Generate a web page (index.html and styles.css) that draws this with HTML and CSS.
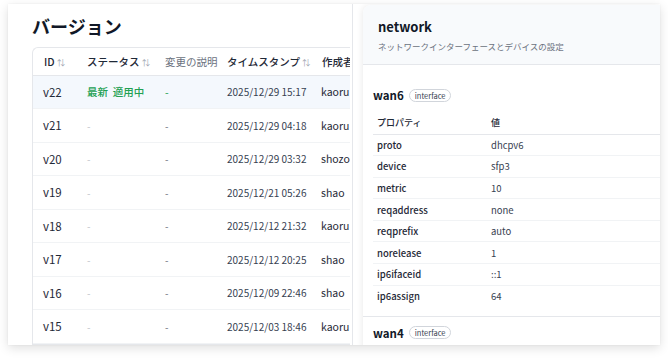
FILE: index.html
```html
<!DOCTYPE html>
<html lang="ja">
<head>
<meta charset="utf-8">
<link rel="stylesheet" href="styles.css">
</head>
<body>
<div class="frame">
  <div class="left">
    <h1 class="title">バージョン</h1>
    <div class="tablewrap">
      <table class="versions">
        <colgroup>
          <col class="c-id"><col class="c-status"><col class="c-desc"><col class="c-ts"><col class="c-user">
        </colgroup>
        <thead>
          <tr>
            <th>ID <span class="sort">⇅</span></th>
            <th>ステータス <span class="sort">⇅</span></th>
            <th class="nosort">変更の説明</th>
            <th>タイムスタンプ <span class="sort">⇅</span></th>
            <th>作成者</th>
          </tr>
        </thead>
        <tbody>
          <tr class="current"><td class="id">v22</td><td class="status ok">最新&nbsp;&nbsp;適用中</td><td class="desc ok">-</td><td class="ts">2025/12/29 15:17</td><td class="user">kaoru</td></tr>
          <tr><td class="id">v21</td><td class="status">-</td><td class="desc">-</td><td class="ts">2025/12/29 04:18</td><td class="user">kaoru</td></tr>
          <tr><td class="id">v20</td><td class="status">-</td><td class="desc">-</td><td class="ts">2025/12/29 03:32</td><td class="user">shozo</td></tr>
          <tr><td class="id">v19</td><td class="status">-</td><td class="desc">-</td><td class="ts">2025/12/21 05:26</td><td class="user">shao</td></tr>
          <tr><td class="id">v18</td><td class="status">-</td><td class="desc">-</td><td class="ts">2025/12/12 21:32</td><td class="user">kaoru</td></tr>
          <tr><td class="id">v17</td><td class="status">-</td><td class="desc">-</td><td class="ts">2025/12/12 20:25</td><td class="user">shao</td></tr>
          <tr><td class="id">v16</td><td class="status">-</td><td class="desc">-</td><td class="ts">2025/12/09 22:46</td><td class="user">shao</td></tr>
          <tr><td class="id">v15</td><td class="status">-</td><td class="desc">-</td><td class="ts">2025/12/03 18:46</td><td class="user">kaoru</td></tr>
        </tbody>
      </table>
    </div>
  </div>
  <div class="right">
    <div class="card">
      <div class="card-head">
        <div class="card-title">network</div>
        <div class="card-sub">ネットワークインターフェースとデバイスの設定</div>
      </div>
      <div class="section">
        <div class="sec-title"><span class="sec-name">wan6</span><span class="badge">interface</span></div>
        <table class="props">
          <colgroup><col class="c-prop"><col></colgroup>
          <thead><tr><th>プロパティ</th><th>値</th></tr></thead>
          <tbody>
            <tr><td class="key">proto</td><td>dhcpv6</td></tr>
            <tr><td class="key">device</td><td>sfp3</td></tr>
            <tr><td class="key">metric</td><td>10</td></tr>
            <tr><td class="key">reqaddress</td><td>none</td></tr>
            <tr><td class="key">reqprefix</td><td>auto</td></tr>
            <tr><td class="key">norelease</td><td>1</td></tr>
            <tr><td class="key">ip6ifaceid</td><td>::1</td></tr>
            <tr><td class="key">ip6assign</td><td>64</td></tr>
          </tbody>
        </table>
      </div>
      <div class="section next">
        <div class="sec-title"><span class="sec-name">wan4</span><span class="badge">interface</span></div>
      </div>
    </div>
  </div>
</div>
</body>
</html>
```
FILE: styles.css
```css
* { box-sizing: border-box; }
html, body { margin: 0; padding: 0; background: #ffffff; }
body {
  font-family: "Noto Sans CJK JP", "Noto Sans", sans-serif;
  color: #1f2937;
  width: 668px;
  height: 359px;
  overflow: hidden;
}
.frame {
  margin: 4px 0 0 8px;
  width: 652px;
  height: 341px;
  background: #ffffff;
  box-shadow: 0 3px 10px rgba(0,0,0,0.13), 0 0 2px rgba(0,0,0,0.05);
  display: flex;
  overflow: hidden;
}
.left {
  width: 345px;
  flex: none;
  border-right: 1px solid #e5e7eb;
  padding: 9px 0 0 24px;
  overflow: hidden;
}
.title {
  margin: 0;
  font-size: 18px;
  font-weight: 700;
  line-height: 26px;
  color: #111827;
}
.tablewrap {
  margin-top: 8px;
  border: 1px solid #e5e7eb;
  border-right: none;
  border-radius: 6px 0 0 0;
  width: 318px;
  overflow: hidden;
}
.versions {
  border-collapse: collapse;
  table-layout: fixed;
  width: 360px;
  font-size: 11px;
}
.c-id { width: 43px; }
.c-status { width: 78px; }
.c-desc { width: 62px; }
.c-ts { width: 95px; }
.c-user { width: 82px; }
.versions th {
  height: 27px;
  text-align: left;
  font-weight: 500;
  font-size: 10.5px;
  color: #1f2937;
  padding: 0 0 0 11px;
  white-space: nowrap;
  border-bottom: 1px solid #e5e7eb;
}
.versions th.nosort { color: #6b7280; font-weight: 400; }
.sort { font-size: 8px; color: #9ca3af; font-weight: 400; }
.versions td {
  height: 33.5px;
  padding: 0 0 0 11px;
  white-space: nowrap;
  border-bottom: 1px solid #f1f3f5;
  color: #1f2937;
  font-size: 11px;
}
.versions td.id { padding-left: 10px; font-size: 11.5px; }
.versions td.user { font-size: 10.5px; padding-left: 10px; }
.versions tr.current td { background: #f4f8fd; }
.versions td.status { color: #c0c4ca; font-size: 10px; }
.versions td.desc { color: #6b7280; font-size: 10px; }
.versions td.ok {
  color: #22a052;
  font-weight: 500;
  font-size: 10.5px;
}
.versions td.desc.ok { font-weight: 400; }
.versions td.ts { font-size: 10px; color: #374151; }

.right {
  flex: 1;
  padding: 1px 0 0 10px;
  overflow: hidden;
}
.card {
  height: 360px;
  background: #ffffff;
  border-radius: 8px 0 0 0;
  box-shadow: -1px 0 6px rgba(0,0,0,0.08);
  overflow: hidden;
}
.card-head {
  background: #f8fafc;
  height: 60px;
  padding: 13px 0 0 15px;
  border-bottom: 1px solid #e5e7eb;
}
.card-title {
  font-size: 13px;
  font-weight: 700;
  color: #111827;
  line-height: 17px;
}
.card-sub {
  margin-top: 5px;
  font-size: 8.5px;
  color: #6b7280;
  line-height: 12px;
}
.section {
  padding: 22px 0 0 10px;
}
.sec-title {
  display: flex;
  align-items: center;
  height: 16px;
}
.sec-name {
  font-size: 11.5px;
  font-weight: 700;
  color: #111827;
}
.badge {
  margin-left: 5px;
  font-size: 7.5px;
  color: #374151;
  border: 1px solid #d1d5db;
  border-radius: 8px;
  padding: 0 5px;
  line-height: 11px;
}
.props {
  margin-top: 8px;
  width: 100%;
  border-collapse: collapse;
  table-layout: fixed;
  font-size: 9.5px;
}
.c-prop { width: 114px; }
.props th {
  height: 23px;
  text-align: left;
  font-weight: 500;
  font-size: 9px;
  color: #1f2937;
  padding: 0 0 0 4px;
  border-bottom: 1px solid #e5e7eb;
}
.props td {
  height: 21.6px;
  padding: 0 0 0 4px;
  color: #374151;
  border-bottom: 1px solid #f1f3f5;
}
.props tr:last-child td { border-bottom: none; }
.props td.key { color: #1f2937; font-weight: 500; }
.section.next {
  margin-top: 9px;
  border-top: 1px solid #e5e7eb;
  padding-top: 8px;
}
```
